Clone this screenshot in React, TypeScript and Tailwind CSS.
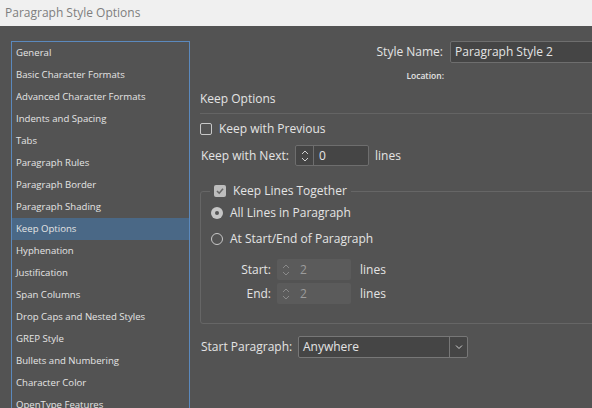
import React from "react";

const font = { fontFamily: '"Open Sans", "Noto Sans", sans-serif' };

const categories = [
	"General",
	"Basic Character Formats",
	"Advanced Character Formats",
	"Indents and Spacing",
	"Tabs",
	"Paragraph Rules",
	"Paragraph Border",
	"Paragraph Shading",
	"Keep Options",
	"Hyphenation",
	"Justification",
	"Span Columns",
	"Drop Caps and Nested Styles",
	"GREP Style",
	"Bullets and Numbering",
	"Character Color",
	"OpenType Features",
];

function Arrows({ dim }: { dim?: boolean }) {
	const c = dim ? "#8a8a8a" : "#cfcfcf";
	return (
		<svg width="10" height="16" viewBox="0 0 10 16" fill="none">
			<path d="M2 6 L5 3 L8 6" stroke={c} strokeWidth="1" />
			<path d="M2 10 L5 13 L8 10" stroke={c} strokeWidth="1" />
		</svg>
	);
}

function Spinner({ value, dim }: { value: string; dim?: boolean }) {
	if (dim) {
		return (
			<div className="flex h-[21px] w-[74px] rounded-[2px] bg-[#5b5b5b]">
				<div className="flex w-[18px] items-center justify-center">
					<Arrows dim />
				</div>
				<div className="flex flex-1 items-center pl-[5px] text-[12px] text-[#9c9c9c]">{value}</div>
			</div>
		);
	}
	return (
		<div className="flex h-[21px] w-[74px] rounded-[2px] border border-[#6e6e6e] bg-[#454545]">
			<div className="flex w-[18px] items-center justify-center border-r border-[#6e6e6e]">
				<Arrows />
			</div>
			<div className="flex flex-1 items-center pl-[5px] text-[12px] text-[#e6e6e6]">{value}</div>
		</div>
	);
}

function Checkbox({ checked }: { checked?: boolean }) {
	if (checked) {
		return (
			<div className="flex h-[12px] w-[12px] items-center justify-center rounded-[2px] bg-[#bdbdbd]">
				<svg width="10" height="10" viewBox="0 0 10 10" fill="none">
					<path d="M2 5 L4.2 7.2 L8 2.8" stroke="#666" strokeWidth="1.6" />
				</svg>
			</div>
		);
	}
	return <div className="h-[12px] w-[12px] rounded-[2px] border border-[#c8c8c8]" />;
}

function Radio({ checked }: { checked?: boolean }) {
	if (checked) {
		return (
			<div className="flex h-[12px] w-[12px] items-center justify-center rounded-full bg-[#c6c6c6]">
				<div className="h-[4px] w-[4px] rounded-full bg-[#555]" />
			</div>
		);
	}
	return <div className="h-[12px] w-[12px] rounded-full border border-[#c8c8c8]" />;
}

export default function App() {
	return (
		<div
			className="flex h-[408px] w-[592px] flex-col overflow-hidden bg-[#535353] text-[#e4e4e4]"
			style={font}
		>
			<div className="flex h-[26px] shrink-0 items-center bg-[#f0f0f0] pl-[5px] text-[12px] text-[#7e7e7e]">
				Paragraph Style Options
			</div>

			<div className="flex min-h-0 flex-1">
				<div className="w-[200px] shrink-0 pl-[11px] pt-[15px]">
					<div className="h-[400px] w-[179px] border border-[#5b89bd]">
						{categories.map((c) => (
							<div
								key={c}
								className={`flex h-[22px] items-center pl-[4px] text-[9.6px] ${
									c === "Keep Options" ? "bg-[#4a6886]" : ""
								}`}
							>
								{c}
							</div>
						))}
					</div>
				</div>

				<div className="min-w-0 flex-1 overflow-hidden">
					<div className="mt-[15px] flex h-[22px] items-center">
						<div className="w-[243px] shrink-0 text-right text-[12px]">Style Name:</div>
						<div className="ml-[7px] flex h-[22px] w-[160px] shrink-0 items-center rounded-[2px] border border-[#6e6e6e] bg-[#454545] pl-[4px] text-[12px]">
							Paragraph Style 2
						</div>
					</div>
					<div className="mt-[6px] flex h-[14px] items-center">
						<div className="w-[244px] shrink-0 text-right text-[8.5px] font-semibold">Location:</div>
					</div>

					<div className="mt-[8px] flex h-[16px] items-center text-[12px]">Keep Options</div>
					<div className="mt-[6px] h-px bg-[#646464]" />

					<div className="mt-[8px] flex h-[14px] items-center">
						<Checkbox />
						<span className="ml-[7px] text-[12px]">Keep with Previous</span>
					</div>

					<div className="mt-[9px] flex h-[21px] items-center">
						<span className="w-[95px] shrink-0 pl-px text-[12px]">Keep with Next:</span>
						<Spinner value="0" />
						<span className="ml-[6px] text-[12px]">lines</span>
					</div>

					<fieldset className="mt-[18px] h-[140px] w-[420px] rounded-[3px] border border-[#666]">
						<legend className="ml-[9px] flex h-[14px] items-center px-[4px]">
							<Checkbox checked />
							<span className="ml-[7px] text-[12px]">Keep Lines Together</span>
						</legend>

						<div className="mt-[7px] flex h-[16px] items-center pl-[10px]">
							<Radio checked />
							<span className="ml-[7px] text-[12px]">All Lines in Paragraph</span>
						</div>
						<div className="mt-[10px] flex h-[16px] items-center pl-[10px]">
							<Radio />
							<span className="ml-[7px] text-[12px]">At Start/End of Paragraph</span>
						</div>

						<div className="mt-[12px] flex flex-col gap-[3px]">
							<div className="flex items-center">
								<span className="w-[70px] shrink-0 text-right text-[12px]">Start:</span>
								<div className="ml-[6px]">
									<Spinner value="2" dim />
								</div>
								<span className="ml-[9px] text-[12px]">lines</span>
							</div>
							<div className="flex items-center">
								<span className="w-[70px] shrink-0 text-right text-[12px]">End:</span>
								<div className="ml-[6px]">
									<Spinner value="2" dim />
								</div>
								<span className="ml-[9px] text-[12px]">lines</span>
							</div>
						</div>
					</fieldset>

					<div className="mt-[12px] flex h-[22px] items-center">
						<span className="w-[98px] shrink-0 pl-px text-[12px]">Start Paragraph:</span>
						<div className="flex h-[22px] w-[170px] rounded-[2px] border border-[#777] bg-[#454545]">
							<div className="flex flex-1 items-center pl-[4px] text-[12px]">Anywhere</div>
							<div className="flex w-[18px] items-center justify-center border-l border-[#777]">
								<svg width="8" height="6" viewBox="0 0 8 6" fill="none">
									<path d="M1 1.5 L4 4.5 L7 1.5" stroke="#cfcfcf" strokeWidth="1" />
								</svg>
							</div>
						</div>
					</div>
				</div>
			</div>
		</div>
	);
}
